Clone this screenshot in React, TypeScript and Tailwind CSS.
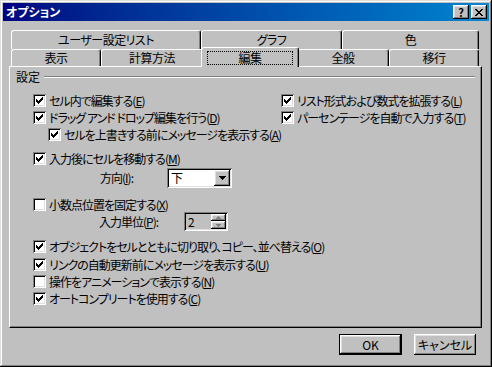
const raised =
  "bg-[#c0c0c0] shadow-[inset_-1px_-1px_0_#000,inset_1px_1px_0_#fff,inset_-2px_-2px_0_#808080,inset_2px_2px_0_#dfdfdf]";
const sunken =
  "shadow-[inset_1px_1px_0_#808080,inset_-1px_-1px_0_#fff,inset_2px_2px_0_#000,inset_-2px_-2px_0_#dfdfdf]";

function CheckMark() {
  return (
    <svg width="7" height="7" viewBox="0 0 7 7" shapeRendering="crispEdges">
      <rect x="6" y="0" width="1" height="1" />
      <rect x="5" y="1" width="2" height="1" />
      <rect x="0" y="2" width="1" height="1" />
      <rect x="4" y="2" width="3" height="1" />
      <rect x="0" y="3" width="2" height="1" />
      <rect x="3" y="3" width="3" height="1" />
      <rect x="0" y="4" width="5" height="1" />
      <rect x="1" y="5" width="3" height="1" />
      <rect x="2" y="6" width="1" height="1" />
    </svg>
  );
}

function CheckRow({ checked, label, acc, className = "" }: { checked: boolean; label: string; acc: string; className?: string }) {
  return (
    <div className={"flex items-center h-[17px] whitespace-nowrap " + className}>
      <span className={"w-[13px] h-[13px] bg-white flex items-center justify-center shrink-0 " + sunken}>
        {checked && <CheckMark />}
      </span>
      <span className="ml-[3px] tracking-[-1px]">
        {label}(<u>{acc}</u>)
      </span>
    </div>
  );
}

function Tab({ label, w, selected = false, tall = false }: { label: string; w: string; selected?: boolean; tall?: boolean }) {
  return (
    <div
      className={
        "flex items-center justify-center shrink-0 bg-[#c0c0c0] border-l border-t border-white border-r border-r-black rounded-t-[3px] shadow-[inset_-1px_0_0_#808080] tracking-[-0.5px] " +
        w +
        (selected ? " relative z-10 -mx-[2px] -mt-[2px] -mb-[1px] h-[20px]" : tall ? " h-[19px]" : " h-[17px]")
      }
    >
      {selected ? (
        <span className="border border-dotted border-black w-[86px] h-[14px] flex items-center justify-center">{label}</span>
      ) : (
        label
      )}
    </div>
  );
}

export default function App() {
  return (
    <div className="w-[492px] h-[367px] bg-[#c0c0c0] p-[3px] flex flex-col text-[12px] text-black font-['MS_UI_Gothic','Noto_Sans_CJK_JP',sans-serif] [font-feature-settings:'palt'] shadow-[inset_-1px_-1px_0_#000,inset_1px_1px_0_#dfdfdf,inset_-2px_-2px_0_#808080,inset_2px_2px_0_#fff] overflow-hidden">
      {/* title bar */}
      <div className="h-[18px] bg-linear-to-r from-[#000080] to-[#1084d0] flex items-center pl-[3px] pr-[2px] shrink-0">
        <span className="text-white font-bold flex-1">オプション</span>
        <span className={"w-[16px] h-[14px] flex items-center justify-center font-bold text-[11px] leading-none " + raised}>?</span>
        <span className={"w-[16px] h-[14px] ml-[2px] flex items-center justify-center " + raised}>
          <svg width="8" height="7" viewBox="0 0 8 7" shapeRendering="crispEdges">
            <path d="M0 0h2v1h1v1h2V1h1V0h2v1H7v1H6v1H5v1h1v1h1v1h1v1H6V6H5V5H3v1H2v1H0V6h1V5h1V4h1V3H2V2H1V1H0z" />
          </svg>
        </span>
      </div>

      {/* tabs + panel */}
      <div className="flex flex-col pl-[6px] pr-[7px] pt-[9px] shrink-0">
        <div className="flex pl-[2px]">
          <Tab label="ユーザー設定リスト" w="w-[190px]" tall />
          <Tab label="グラフ" w="w-[141px]" tall />
          <Tab label="色" w="w-[137px]" tall />
        </div>
        <div className="flex items-end pl-[2px]">
          <Tab label="表示" w="w-[90px]" />
          <Tab label="計算方法" w="w-[102px]" />
          <Tab label="編集" w="w-[98px]" selected />
          <Tab label="全般" w="w-[92px]" />
          <Tab label="移行" w="w-[90px]" />
        </div>
        <div className="h-[262px] border-l border-t border-white border-r border-b border-r-black border-b-black shadow-[inset_-1px_-1px_0_#808080] flex flex-col pl-[6px] pr-[6px] pt-[3px]">
          <div className="flex items-center h-[14px]">
            <span>設定</span>
            <span className="flex-1 ml-[4px] h-[2px] border-t border-[#808080] border-b border-b-white" />
          </div>
          <div className="flex flex-col pl-[17px] mt-[8px]">
            <div className="flex">
              <CheckRow checked label="セル内で編集する" acc="E" className="w-[248px]" />
              <CheckRow checked label="リスト形式および数式を拡張する" acc="L" />
            </div>
            <div className="flex">
              <CheckRow checked label="ドラッグ アンド ドロップ編集を行う" acc="D" className="w-[248px]" />
              <CheckRow checked label="パーセンテージを自動で入力する" acc="T" />
            </div>
            <CheckRow checked label="セルを上書きする前にメッセージを表示する" acc="A" className="ml-[15px]" />

            <CheckRow checked label="入力後にセルを移動する" acc="M" className="mt-[7px]" />
            <div className="flex items-center h-[20px] mt-[1px]">
              <span className="w-[134px] pl-[67px] whitespace-nowrap tracking-[-1px]">
                方向(<u>I</u>):
              </span>
              <div className={"w-[65px] h-[20px] bg-white flex items-center " + sunken}>
                <span className="flex-1 pl-[4px]">下</span>
                <span className={"w-[16px] h-[16px] mr-[2px] flex items-center justify-center " + raised}>
                  <svg width="7" height="4" viewBox="0 0 7 4" shapeRendering="crispEdges">
                    <path d="M0 0h7v1H6v1H5v1H4v1H3V3H2V2H1V1H0z" />
                  </svg>
                </span>
              </div>
            </div>

            <CheckRow checked={false} label="小数点位置を固定する" acc="X" className="mt-[8px]" />
            <div className="flex items-center h-[19px] -mt-[1px]">
              <span className="w-[151px] pl-[66px] whitespace-nowrap tracking-[-1px]">
                入力単位(<u>P</u>):
              </span>
              <div className={"w-[44px] h-[19px] bg-[#c0c0c0] flex items-center " + sunken}>
                <span className="flex-1 pl-[4px]">2</span>
                <div className="flex flex-col mr-[2px]">
                  <span className={"w-[15px] h-[7px] flex items-center justify-center " + raised}>
                    <svg width="5" height="3" viewBox="0 0 5 3" shapeRendering="crispEdges" fill="#808080">
                      <path d="M2 0h1v1h1v1h1v1H0V2h1V1h1z" />
                    </svg>
                  </span>
                  <span className={"w-[15px] h-[8px] flex items-center justify-center " + raised}>
                    <svg width="5" height="3" viewBox="0 0 5 3" shapeRendering="crispEdges" fill="#808080">
                      <path d="M0 0h5v1H4v1H3v1H2V2H1V1H0z" />
                    </svg>
                  </span>
                </div>
              </div>
            </div>

            <CheckRow checked label="オブジェクトをセルとともに切り取り、コピー、並べ替える" acc="O" className="mt-[7px]" />
            <CheckRow checked label="リンクの自動更新前にメッセージを表示する" acc="U" className="mt-[1px]" />
            <CheckRow checked={false} label="操作をアニメーションで表示する" acc="N" />
            <CheckRow checked label="オートコンプリートを使用する" acc="C" />
          </div>
        </div>
      </div>

      {/* buttons */}
      <div className="flex justify-end gap-[12px] pr-[13px] mt-[6px]">
        <button className="w-[63px] h-[21px] border border-black p-0 flex">
          <span className={"flex-1 flex items-center justify-center " + raised}>OK</span>
        </button>
        <button className={"w-[62px] h-[21px] flex items-center justify-center " + raised}>キャンセル</button>
      </div>
    </div>
  );
}
